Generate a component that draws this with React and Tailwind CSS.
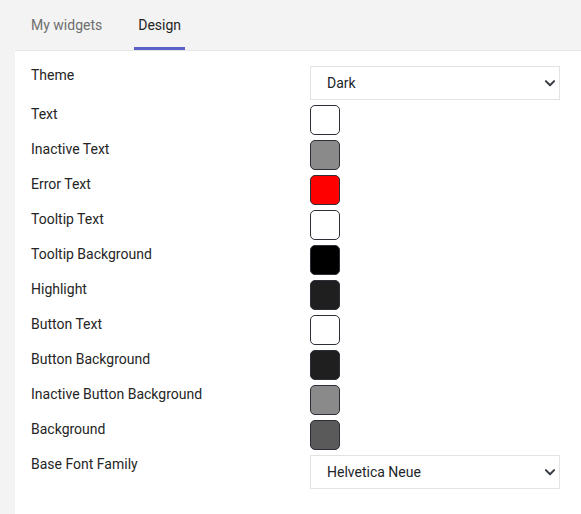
import { useState } from "react";

const colorRows = [
  { label: "Text", color: "#ffffff" },
  { label: "Inactive Text", color: "#8a8a8a" },
  { label: "Error Text", color: "#ff0000" },
  { label: "Tooltip Text", color: "#ffffff" },
  { label: "Tooltip Background", color: "#000000" },
  { label: "Highlight", color: "#1f1f1f" },
  { label: "Button Text", color: "#ffffff" },
  { label: "Button Background", color: "#1f1f1f" },
  { label: "Inactive Button Background", color: "#8a8a8a" },
  { label: "Background", color: "#5a5a5a" },
];

function Select({ value, options }) {
  const [val, setVal] = useState(value);
  return (
    <div className="relative w-[250px]">
      <select
        value={val}
        onChange={(e) => setVal(e.target.value)}
        className="block h-[34px] w-full appearance-none border border-[#e3e3e3] bg-white pl-4 pr-8 text-[14px] text-[#212529] outline-none"
      >
        {options.map((o) => (
          <option key={o}>{o}</option>
        ))}
      </select>
      <svg
        className="pointer-events-none absolute right-[4px] top-1/2 -translate-y-1/2"
        width="12"
        height="12"
        viewBox="0 0 16 16"
      >
        <path d="M2.5 5.5 8 11l5.5-5.5" fill="none" stroke="#343a40" strokeWidth="2.6" strokeLinecap="round" strokeLinejoin="round" />
      </svg>
    </div>
  );
}

export default function App() {
  return (
    <div className="min-h-[514px] bg-[#f3f3f3] text-[14px] text-[#252525]" style={{ fontFamily: "Roboto, 'Liberation Sans', sans-serif" }}>
      <div className="flex h-[50px] items-end pl-[15px]">
        <button className="relative h-full px-4 pt-[1px] text-[#6e6e6e]">My widgets</button>
        <button className="relative ml-[16px] flex h-full flex-col items-center justify-center px-[3px] text-[#252423]">
          <span className="px-[1px]">Design</span>
          <span className="absolute bottom-0 left-0 right-0 h-[3px] bg-[#5b5fc7]" />
        </button>
      </div>
      <div className="ml-[15px] min-h-[464px] border-t border-[#e6e6e6] bg-white pl-4 pt-[14px]">
        <div className="flex h-[39px]">
          <div className="w-[279px] leading-5">Theme</div>
          <div className="pt-[1px]">
            <Select value="Dark" options={["Dark", "Light", "Custom"]} />
          </div>
        </div>
        {colorRows.map((r) => (
          <div key={r.label} className="flex h-[35px]">
            <div className="w-[279px] leading-5">{r.label}</div>
            <div className="pt-[1px]">
              <div className="h-[30px] w-[30px] rounded-[5px] border border-[#2b2f36]" style={{ backgroundColor: r.color }} />
            </div>
          </div>
        ))}
        <div className="flex h-[39px]">
          <div className="w-[279px] leading-5">Base Font Family</div>
          <div className="pt-[1px]">
            <Select value="Helvetica Neue" options={["Helvetica Neue", "Arial", "Roboto"]} />
          </div>
        </div>
      </div>
    </div>
  );
}
